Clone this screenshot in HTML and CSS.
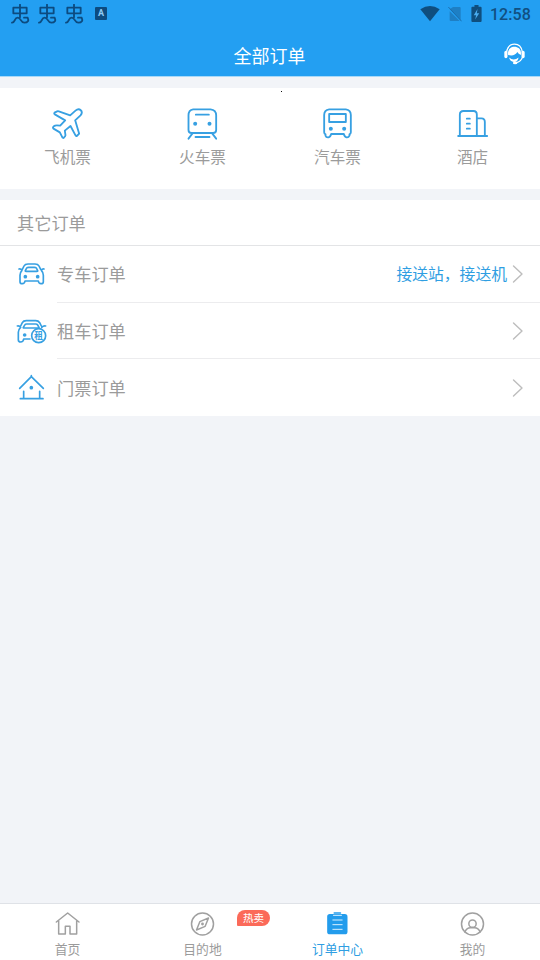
FILE: index.html
```html
<!DOCTYPE html>
<html lang="zh-CN">
<head>
<meta charset="utf-8">
<title>全部订单</title>
<link rel="stylesheet" href="styles.css">
</head>
<body>
<div class="app">
  <header class="header">
    <div class="status">
      <div class="status-left">
        <svg class="bug" viewBox="0 0 60 60"><path d="M30 2V40M10 11H50V28H10ZM6 56C17 55 12 41 23 41C34 41 31 56 43 56C54 56 57 49 53 43M42 41H53"/></svg>
        <svg class="bug" viewBox="0 0 60 60"><path d="M30 2V40M10 11H50V28H10ZM6 56C17 55 12 41 23 41C34 41 31 56 43 56C54 56 57 49 53 43M42 41H53"/></svg>
        <svg class="bug" viewBox="0 0 60 60"><path d="M30 2V40M10 11H50V28H10ZM6 56C17 55 12 41 23 41C34 41 31 56 43 56C54 56 57 49 53 43M42 41H53"/></svg>
        <span class="badge-a">A</span>
      </div>
      <div class="status-right">
        <svg class="wifi" viewBox="0 0 60 48"><path d="M1 10Q30-10 59 10L30 46Z"/></svg>
        <svg class="sim" viewBox="0 0 42 48"><path class="sim-body" d="M15 3H35Q38 3 38 6V43L5 10ZM5 16L35 45H8Q5 45 5 42Z"/><path class="sim-slash" d="M2 4L40 45"/></svg>
        <svg class="battery" viewBox="0 0 32 50"><path d="M10 0H22V5H28Q31 5 31 8V47Q31 50 28 50H4Q1 50 1 47V8Q1 5 4 5H10Z"/><path class="bolt" d="M19 12L8 30H15L12 43L24 24H17Z"/></svg>
        <span class="clock">12:58</span>
      </div>
    </div>
    <div class="titlebar">
      <h1 class="title">全部订单</h1>
      <svg class="service" viewBox="0 0 66 66"><path class="band" d="M8 27C14-6 52-6 58 27M58 43Q54 57 40 60"/><rect class="solid" x="1" y="23" width="10" height="23" rx="5"/><rect class="solid" x="55" y="23" width="10" height="23" rx="5"/><path class="solid" d="M13 36C7 2 59 2 53 36Q45 34 42 27C36 36 26 40 13 36Z"/><path class="solid" d="M16 44Q30 56 46 44Q42 60 31 58Q19 57 16 44Z"/><ellipse class="solid" cx="35" cy="61" rx="7" ry="4"/></svg>
    </div>
  </header>

  <section class="tiles">
    <span class="speck"></span>
    <a class="tile">
      <svg class="tile-icon" viewBox="66.5 40 96 96"><path d="M74 54L82 50Q84 49 87 50L121 62L137 48C149 38 162 50 152 62L136 77L148 117L141 124Q139 125 137 122L122 94L105 108L107 122Q107 125 101 130L98 129L90 113L71 102Q67 99 73 94Q76 91 91 93L106 77L75 59Q72 57 74 54Z"/></svg>
      <span class="tile-label">飞机票</span>
    </a>
    <a class="tile">
      <svg class="tile-icon" viewBox="469.5 40 96 96"><path d="M488 44H540Q557 46 557 62V106Q557 115 548 115H483Q474 115 474 106V62Q474 46 488 44ZM496 60H535M486 116L474 132M545 116L557 132M495 127H537"/><circle class="dot" cx="494" cy="87" r="6"/><circle class="dot" cx="537" cy="87" r="6"/></svg>
      <span class="tile-label">火车票</span>
    </a>
    <a class="tile">
      <svg class="tile-icon" viewBox="64.5 40 96 96"><path d="M86 44H136Q151 46 151 61V113Q151 117 147 119V123Q144 129 138 128Q132 127 130 118H92Q90 127 84 128Q77 129 75 123V119Q71 117 71 113V61Q71 46 86 44ZM86 58H136V82H86Z"/><circle class="dot" cx="91" cy="102" r="6"/><circle class="dot" cx="131" cy="102" r="6"/></svg>
      <span class="tile-label">汽车票</span>
    </a>
    <a class="tile">
      <svg class="tile-icon" viewBox="469.5 40 96 96"><path d="M478 124V60Q478 49 489 49H519Q529 49 529 60V124M529 71H543Q553 71 553 82V124M473 124H560M499 72H508M499 87H508M499 102H508"/></svg>
      <span class="tile-label">酒店</span>
    </a>
  </section>

  <section class="orders">
    <h2 class="orders-title">其它订单</h2>
    <a class="row">
      <svg class="row-icon" viewBox="48 164 96 87"><path d="M67 192L72 182Q75 176 84 176H105Q114 176 117 182L122 192M76 196L80 188Q82 186 86 186H103Q107 186 109 188L113 196Q114 198 111 198H78Q75 198 76 196ZM57 191Q63 190 66 195Q60 201 60 210V229Q60 235 67 235Q74 235 75 227H115Q116 235 123 235Q130 235 130 229V210Q130 201 124 195Q127 190 132 191"/><circle class="dot" cx="76" cy="214" r="5.5"/><circle class="dot" cx="113" cy="214" r="5.5"/></svg>
      <div class="row-body"><span class="row-label">专车订单</span><span class="row-note">接送站，接送机</span><svg class="chevron" viewBox="0 0 12 18"><path d="M1.5 1L10 9L1.5 17"/></svg></div>
    </a>
    <a class="row">
      <svg class="row-icon" viewBox="48 32 96 87"><path d="M62 59L67 49Q70 43 79 43H107Q115 43 119 49L124 59M70 63L75 55Q76 53 80 53H107Q111 53 113 56L117 63Q118 65 115 65H72Q69 65 70 63ZM52 59Q59 58 62 63Q55 69 55 78V101Q55 107 62 107Q70 107 71 98H90M137 59Q130 58 125 63"/><circle class="dot" cx="74" cy="86" r="5.5"/><circle class="seal" cx="116" cy="88" r="21"/><text class="seal-text" x="116" y="97" text-anchor="middle">租</text></svg>
      <div class="row-body"><span class="row-label">租车订单</span><svg class="chevron" viewBox="0 0 12 18"><path d="M1.5 1L10 9L1.5 17"/></svg></div>
    </a>
    <a class="row">
      <svg class="row-icon" viewBox="48 203 96 87"><path d="M59 249L94 214L130 249M94 214V211M71 258V280M119 258V280M61 280H129"/><circle class="dot" cx="94" cy="247" r="5.5"/></svg>
      <div class="row-body"><span class="row-label">门票订单</span><svg class="chevron" viewBox="0 0 12 18"><path d="M1.5 1L10 9L1.5 17"/></svg></div>
    </a>
  </section>

  <nav class="tabs">
    <a class="tab">
      <svg class="tab-icon" viewBox="75 49 78 78"><path d="M79 82L113 55L147 82M86 78V118H106V95H120V118H140V78"/></svg>
      <span class="tab-label">首页</span>
    </a>
    <a class="tab">
      <svg class="tab-icon" viewBox="479.5 49 78 78"><circle cx="517" cy="88" r="33"/><path d="M535 70L525 95L499 106L509 81Z"/><circle cx="517" cy="88" r="2"/></svg>
      <span class="tab-label">目的地</span>
      <span class="hot">热卖</span>
    </a>
    <a class="tab active">
      <svg class="tab-icon" viewBox="104.5 49 78 78"><rect class="board" x="111" y="58" width="61" height="61" rx="8"/><path class="clip" d="M132 55H151"/><path class="lines" d="M130 62H154M128 76H156M128 90H156M128 104H156"/></svg>
      <span class="tab-label">订单中心</span>
    </a>
    <a class="tab">
      <svg class="tab-icon" viewBox="509.5 49 78 78"><circle cx="547" cy="88" r="33"/><circle cx="547" cy="87" r="11"/><path d="M524 112Q529 99 541 99H553Q565 99 570 112"/></svg>
      <span class="tab-label">我的</span>
    </a>
  </nav>
</div>
</body>
</html>
```
FILE: styles.css
```css
* { box-sizing: border-box; }

body {
  margin: 0;
  background: #f2f4f8;
  color: #9b9b9b;
  font-family: Roboto, "Noto Sans CJK SC", sans-serif;
  font-weight: 400;
}

.app {
  display: flex;
  flex-direction: column;
  height: 960px;
  overflow: hidden;
}

svg {
  display: block;
  flex: none;
  fill: none;
  stroke-linecap: round;
  stroke-linejoin: round;
}

h1, h2 { margin: 0; font-weight: inherit; }

/* Header */
.header {
  height: 77px;
  background: #239ff2;
  border-bottom: 1px solid #a9d9f8;
}

.status {
  display: flex;
  justify-content: space-between;
  height: 28px;
  padding: 0 9px 0 10px;
}

.status-left, .status-right { display: flex; align-items: center; }
.status-left { gap: 7px; }
.bug { width: 20px; height: 20px; stroke: #0c4b80; stroke-width: 5.5; }

.badge-a {
  width: 12px;
  height: 13px;
  margin: -1px 0 0 4px;
  border-radius: 1px;
  background: #0c4b80;
  color: #8fcaf5;
  font-size: 9px;
  font-weight: 700;
  line-height: 13px;
  text-align: center;
}

.wifi { width: 20px; height: 16px; margin: -1px 8px 0 0; fill: #0f4e7e; }
.sim { width: 14px; height: 16px; margin: -1px 9px 0 0; }
.sim-body { fill: #1e7fc4; }
.sim-slash { stroke: #1a6faf; stroke-width: 3; }
.battery { width: 11px; height: 17px; margin: -2px 8px 0 0; fill: #0f4e7e; }
.bolt { fill: #49acef; }
.clock { color: #114f81; font-size: 16px; font-weight: 500; line-height: 29px; letter-spacing: 0.1px; }

.titlebar {
  display: grid;
  grid-template-columns: 1fr auto 1fr;
  align-items: center;
  height: 48px;
  padding: 8px 15px 0 14px;
}

.title {
  grid-column: 2;
  margin-top: 2px;
  color: #fff;
  font-size: 18px;
  line-height: 24px;
}

.service { justify-self: end; width: 21px; height: 22px; margin-top: -4px; }
.band { stroke: #fff; stroke-width: 4; }
.solid { fill: #fff; }

/* Ticket types */
.tiles {
  position: relative;
  display: grid;
  grid-template-columns: repeat(4, 1fr);
  height: 101px;
  margin-top: 11px;
  padding-top: 20px;
  background: #fff;
}

.speck {
  position: absolute;
  top: 3px;
  left: 281px;
  width: 1px;
  height: 1px;
  background: #111;
}

.tile { display: flex; flex-direction: column; align-items: center; }
.tile-icon { width: 32px; height: 32px; stroke: #37a0e2; stroke-width: 5.5; }
.dot { fill: #37a0e2; stroke: none; }
.tile-label { margin-top: 6px; font-size: 15.6px; line-height: 25px; }

/* Other orders */
.orders { margin-top: 11px; background: #fff; }

.orders-title {
  height: 46px;
  padding: 1px 0 0 17px;
  border-bottom: 1px solid #e3e4e6;
  font-size: 17.2px;
  line-height: 46px;
}

.row { display: flex; align-items: center; height: 56.7px; padding-left: 16px; }
.row-icon { width: 32px; height: 29px; stroke: #37a0e2; stroke-width: 5; }
.seal { fill: #fff; }
.seal-text { fill: #37a0e2; stroke: none; font-size: 26px; font-weight: 700; }

.row-body {
  display: flex;
  flex: 1;
  align-items: center;
  height: 100%;
  margin-left: 9px;
  padding-right: 16px;
  border-bottom: 1px solid #ececee;
}

.row:last-child .row-body { border-bottom: 0; }
.row-label { flex: 1; padding-top: 2px; font-size: 17.2px; line-height: 26px; }
.row-note { margin-right: 5px; padding-top: 2px; color: #2f9ee2; font-size: 15.8px; line-height: 26px; }
.chevron { width: 12px; height: 18px; stroke: #bdbdbd; stroke-width: 1.4; }

/* Bottom navigation */
.tabs {
  display: grid;
  grid-template-columns: repeat(4, 1fr);
  height: 57px;
  margin-top: auto;
  padding-top: 7px;
  border-top: 1px solid #dfe2e7;
  background: #fff;
}

.tab { position: relative; display: flex; flex-direction: column; align-items: center; }
.tab-icon { width: 26px; height: 26px; stroke: #a0a0a0; stroke-width: 4.5; }
.tab-label { margin-top: 3px; font-size: 12.8px; line-height: 20px; }
.active { color: #2f9ee2; }
.board { fill: #239cec; stroke: none; }
.clip { stroke: #239cec; }
.lines { stroke: #d7f0ff; stroke-width: 3; }

.hot {
  position: absolute;
  top: -1px;
  left: 102px;
  width: 33px;
  height: 16px;
  border-radius: 8px 8px 8px 1px;
  background: #fb6a59;
  color: #fff;
  font-size: 10.5px;
  line-height: 17px;
  text-align: center;
}
```
